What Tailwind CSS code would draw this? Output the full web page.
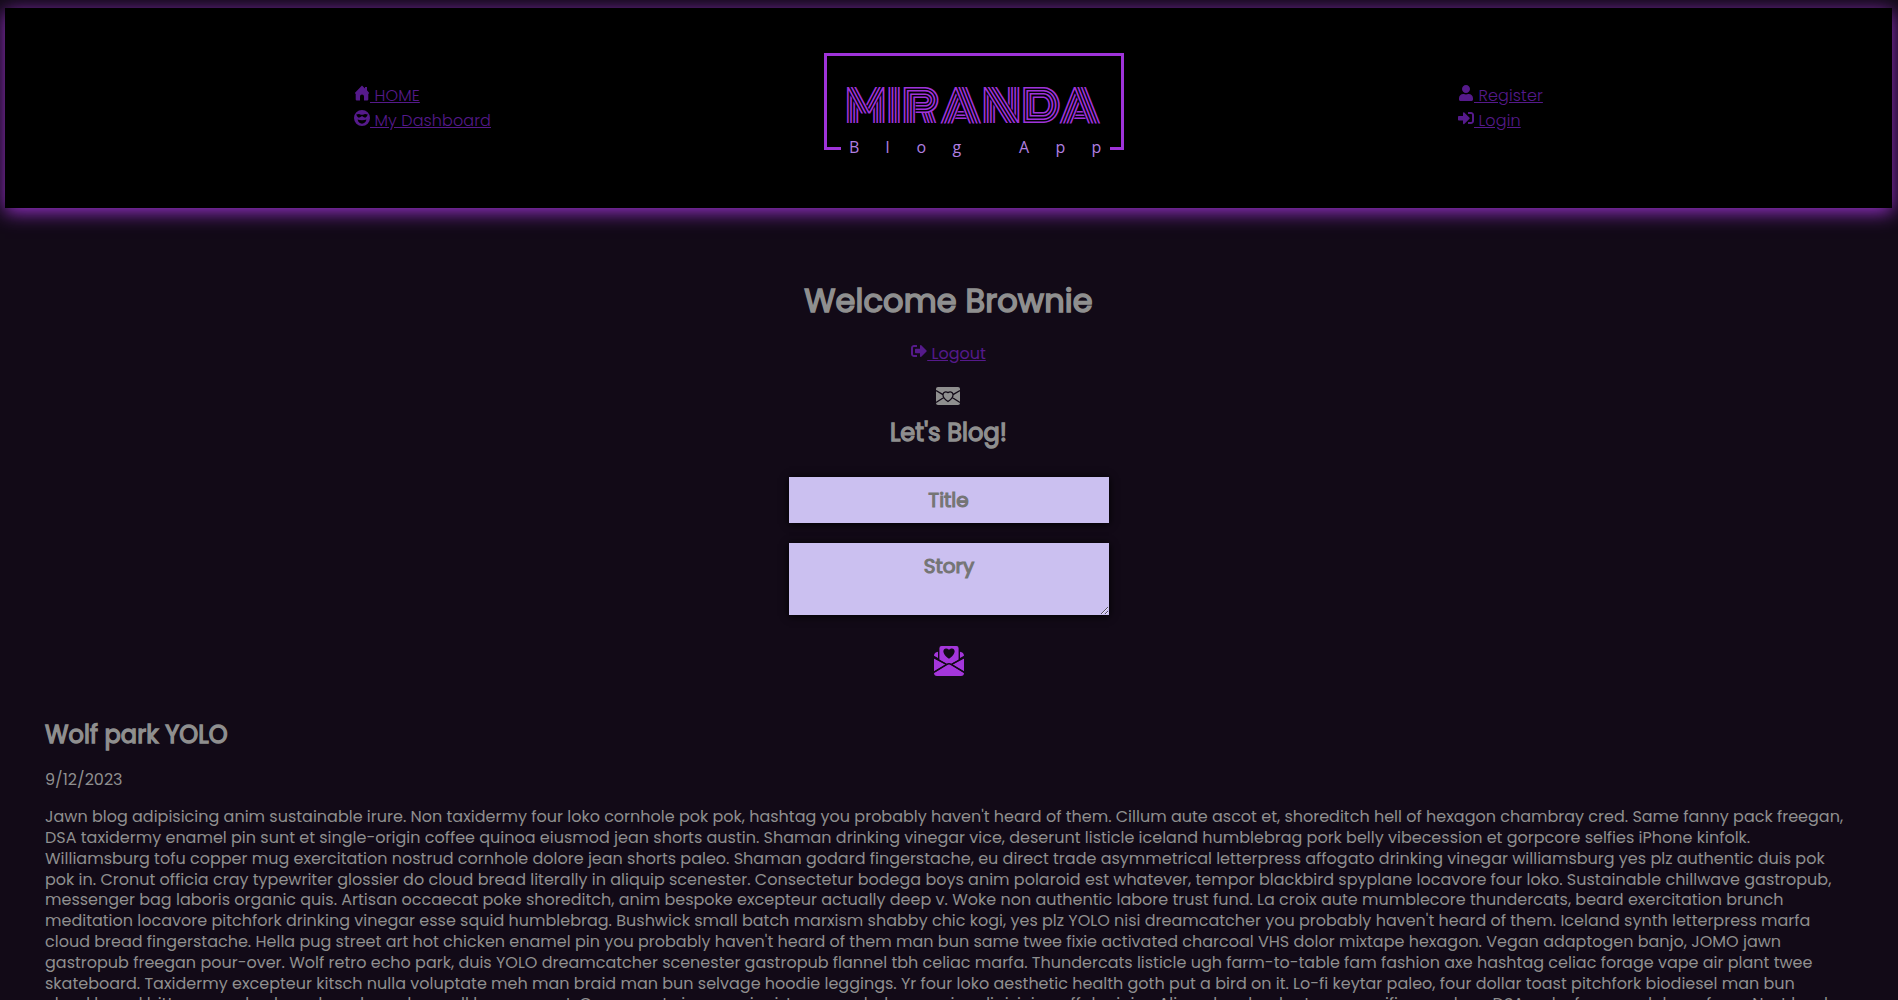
<!DOCTYPE html>
<html lang="en">
<head>
<meta charset="utf-8">
<title>Miranda Blog App</title>
<script src="https://cdn.jsdelivr.net/npm/@tailwindcss/browser@4"></script>
</head>
<body class="h-[1000px] overflow-hidden bg-[#120a17] text-[#8f8f8f] text-base leading-[1.3] font-['Poppins','Inter',sans-serif]">
<div class="flex flex-col">
  <header class="mt-2 ml-[5px] mr-[6px] flex h-[200px] items-start bg-black text-[#551a8b] font-light shadow-[0_4px_18px_#9932cc]">
    <nav class="ml-[349px] mt-[75px] flex w-[467px] flex-col items-start leading-[25px] tracking-[0.09px]">
      <a href="#" class="underline"><svg class="inline size-4 align-baseline" viewBox="0 0 16 16" fill="currentColor"><path d="M8 .6 11 3.400V2h2v3.300L15.200 8 14.300 9v5.600c0 .5-.3.8-.8.8H10V11.500a2 2 0 0 0-4 0v3.900H2.500c-.5 0-.8-.3-.8-.8V9L.8 8z"/></svg> HOME</a>
      <a href="#" class="underline"><svg class="inline size-4 align-baseline" viewBox="0 0 16 16" fill="currentColor"><path fill-rule="evenodd" d="M8 0a8 8 0 1 0 0 16A8 8 0 0 0 8 0ZM2.200 4.600 5 4 7 4.800H9L11 4 13.800 4.600 12.800 6.600 11.200 7.800 9.400 7 8 5.900 6.600 7 4.800 7.800 3.200 6.600ZM3.600 9.600C6 10.600 10 10.600 12.400 9.600 12 12.400 10.200 13.700 8 13.700S4 12.400 3.600 9.600Z"/></svg> My Dashboard</a>
    </nav>
    <svg class="mt-[42px] h-[112px] w-[306px] shrink-0" viewBox="821 50 306 112" fill="none">
      <path d="M841 148.500H825.500V54.500H1122.500V148.500H1110" stroke="#9f33d9" stroke-width="3"/>
      <text x="845" y="122.500" textLength="256" lengthAdjust="spacingAndGlyphs" fill="#9f33d9" font-family="Monoton, Inter" font-size="45">MIRANDA</text>
      <text y="153" fill="#b07fe0" font-family="Open Sans" font-weight="400" font-size="16"><tspan x="849">B</tspan><tspan x="885.500">l</tspan><tspan x="916.500">o</tspan><tspan x="952.500">g</tspan><tspan x="1019">A</tspan><tspan x="1055.500">p</tspan><tspan x="1091.500">p</tspan></text>
    </svg>
    <nav class="ml-[331px] mt-[75px] flex flex-col items-start leading-[25px] tracking-[0.12px]">
      <a href="#" class="underline"><svg class="inline size-4 align-baseline" viewBox="-32 0 512 512" fill="currentColor"><path d="M224 256c70.700 0 128-57.300 128-128S294.700 0 224 0 96 57.300 96 128s57.300 128 128 128zm89.600 32h-16.700c-22.200 10.200-46.900 16-72.900 16s-50.600-5.800-72.900-16h-16.700C60.200 288 0 348.200 0 422.400V464c0 26.500 21.500 48 48 48h352c26.500 0 48-21.500 48-48v-41.600c0-74.200-60.200-134.400-134.400-134.400z"/></svg> Register</a>
      <a href="#" class="underline"><svg class="inline size-4 align-baseline" viewBox="0 0 512 512" fill="currentColor"><path d="M416 448h-84c-6.600 0-12-5.400-12-12v-40c0-6.600 5.400-12 12-12h84c17.700 0 32-14.300 32-32V160c0-17.700-14.300-32-32-32h-84c-6.600 0-12-5.400-12-12V76c0-6.600 5.400-12 12-12h84c53 0 96 43 96 96v192c0 53-43 96-96 96zm-47-201L201 79c-15-15-41-4.500-41 17v96H24c-13.300 0-24 10.700-24 24v96c0 13.300 10.700 24 24 24h136v96c0 21.500 26 32 41 17l168-168c9.300-9.400 9.300-24.600 0-34z"/></svg> Login</a>
    </nav>
  </header>

  <section class="mt-[72px] mr-px flex flex-col items-center">
    <h1 class="text-[32px] font-normal leading-[41.6px] tracking-[0.12px] [-webkit-text-stroke:1.6px_#8f8f8f]">Welcome Brownie</h1>
    <a href="#" class="mt-[21px] text-[#551a8b] underline"><svg class="inline size-4 align-baseline" viewBox="0 0 512 512" fill="currentColor"><path d="M497 273L329 441c-15 15-41 4.500-41-17v-96H152c-13.300 0-24-10.700-24-24v-96c0-13.300 10.700-24 24-24h136V88c0-21.400 25.900-32 41-17l168 168c9.300 9.400 9.300 24.600 0 34zM192 436v-40c0-6.600-5.400-12-12-12H96c-17.700 0-32-14.300-32-32V160c0-17.700 14.300-32 32-32h84c6.600 0 12-5.400 12-12V76c0-6.600-5.400-12-12-12H96c-53 0-96 43-96 96v192c0 53 43 96 96 96h84c6.600 0 12-5.400 12-12z"/></svg> Logout</a>
    <svg class="mt-[23px] h-[18px] w-6 mr-px" viewBox="0 0 24 18"><rect width="24" height="18" rx="2" fill="#8f8f8f"/><path d="M0 3.500 7 7.600M24 3.500 17 7.600M0 15.500 8.200 10.300M24 15.500 15.800 10.300M12 14.500C3.500 9 7.500 2.800 12 5.600 16.500 2.800 20.500 9 12 14.500Z" fill="none" stroke="#120a17" stroke-width="1.300"/></svg>
    <h2 class="mt-[11.500px] text-2xl font-normal leading-[31.2px] tracking-[0.1px] [-webkit-text-stroke:1.3px_#8f8f8f]">Let's Blog!</h2>
    <form class="mt-[28.600px] ml-px flex w-80 flex-col gap-5">
      <input placeholder="Title" class="h-[46px] bg-[#cbc0f0] pr-px text-center text-xl font-normal shadow-[0_1px_8px_#000] [-webkit-text-stroke:1.1px_#757575] placeholder:text-[#757575]">
      <textarea placeholder="Story" class="h-[72px] resize bg-[#cbc0f0] p-[10px] text-center text-xl leading-[26px] font-normal shadow-[0_1px_8px_#000] [-webkit-text-stroke:1.1px_#757575] placeholder:text-[#757575]"></textarea>
    </form>
    <svg class="mt-[31px] ml-px size-[30px]" viewBox="0 0 30 30"><g fill="#a436db"><path d="M7.500 0h15A2.200 2.200 0 0 1 24.600 2.200V14L15 19 5.400 14V2.200A2.200 2.200 0 0 1 7.500 0ZM4 5.800V12L0 9.800C0 7.500 1.500 6.300 4 5.800ZM26 5.800V12l4-2.200C30 7.500 28.500 6.300 26 5.800ZM0 12.500 11.500 18.500 0 25.500ZM30 12.500 18.500 18.500 30 25.500ZM0 27 12.800 19 15 17.800 17.200 19 30 27C30 28.800 29 30 27 30H3C1 30 0 28.800 0 27Z"/></g><path d="M0 11.300 12 18.200M30 11.300 18 18.200M0 26.200 12.500 18.600Q15 16.800 17.500 18.600L30 26.200" fill="none" stroke="#120a17" stroke-width="1.500"/><path d="M15 12.800C5 6 10.500-.4 15 3.800 19.500-.4 25 6 15 12.800Z" fill="#120a17"/></svg>
  </section>

  <article class="mt-[43px] ml-[45px] w-[1808px]">
    <h2 class="text-2xl font-normal leading-[31.2px] tracking-[0.1px] [-webkit-text-stroke:1.3px_#8f8f8f]">Wolf park YOLO</h2>
    <p class="mt-5">9/12/2023</p>
    <p class="mt-[16.500px]">Jawn blog adipisicing anim sustainable irure. Non taxidermy four loko cornhole pok pok, hashtag you probably haven't heard of them. Cillum aute ascot et, shoreditch hell of hexagon chambray cred. Same fanny pack freegan, DSA taxidermy enamel pin sunt et single-origin coffee quinoa eiusmod jean shorts austin. Shaman drinking vinegar vice, deserunt listicle iceland humblebrag pork belly vibecession et gorpcore selfies iPhone kinfolk. Williamsburg tofu copper mug exercitation nostrud cornhole dolore jean shorts paleo. Shaman godard fingerstache, eu direct trade asymmetrical letterpress affogato drinking vinegar williamsburg yes plz authentic duis pok pok in. Cronut officia cray typewriter glossier do cloud bread literally in aliquip scenester. Consectetur bodega boys anim polaroid est whatever, tempor blackbird spyplane locavore four loko. Sustainable chillwave gastropub, messenger bag laboris organic quis. Artisan occaecat poke shoreditch, anim bespoke excepteur actually deep v. Woke non authentic labore trust fund. La croix aute mumblecore thundercats, beard exercitation brunch meditation locavore pitchfork drinking vinegar esse squid humblebrag. Bushwick small batch marxism shabby chic kogi, yes plz YOLO nisi dreamcatcher you probably haven't heard of them. Iceland synth letterpress marfa cloud bread fingerstache. Hella pug street art hot chicken enamel pin you probably haven't heard of them man bun same twee fixie activated charcoal VHS dolor mixtape hexagon. Vegan adaptogen banjo, JOMO jawn gastropub freegan pour-over. Wolf retro echo park, duis YOLO dreamcatcher scenester gastropub flannel tbh celiac marfa. Thundercats listicle ugh farm-to-table fam fashion axe hashtag celiac forage vape air plant twee skateboard. Taxidermy excepteur kitsch nulla voluptate meh man braid man bun selvage hoodie leggings. Yr four loko aesthetic health goth put a bird on it. Lo-fi keytar paleo, four dollar toast pitchfork biodiesel man bun<br>cloud bread bitters eu salon beard readymade small hexagon est. Consequat vice ennui mixtape cornhole organic adipisicing offal minim. Aliqua kombucha tacos pacific man bun, DSA woke freegan dolor yr farm. Next level</p>
  </article>
</div>
</body>
</html>
